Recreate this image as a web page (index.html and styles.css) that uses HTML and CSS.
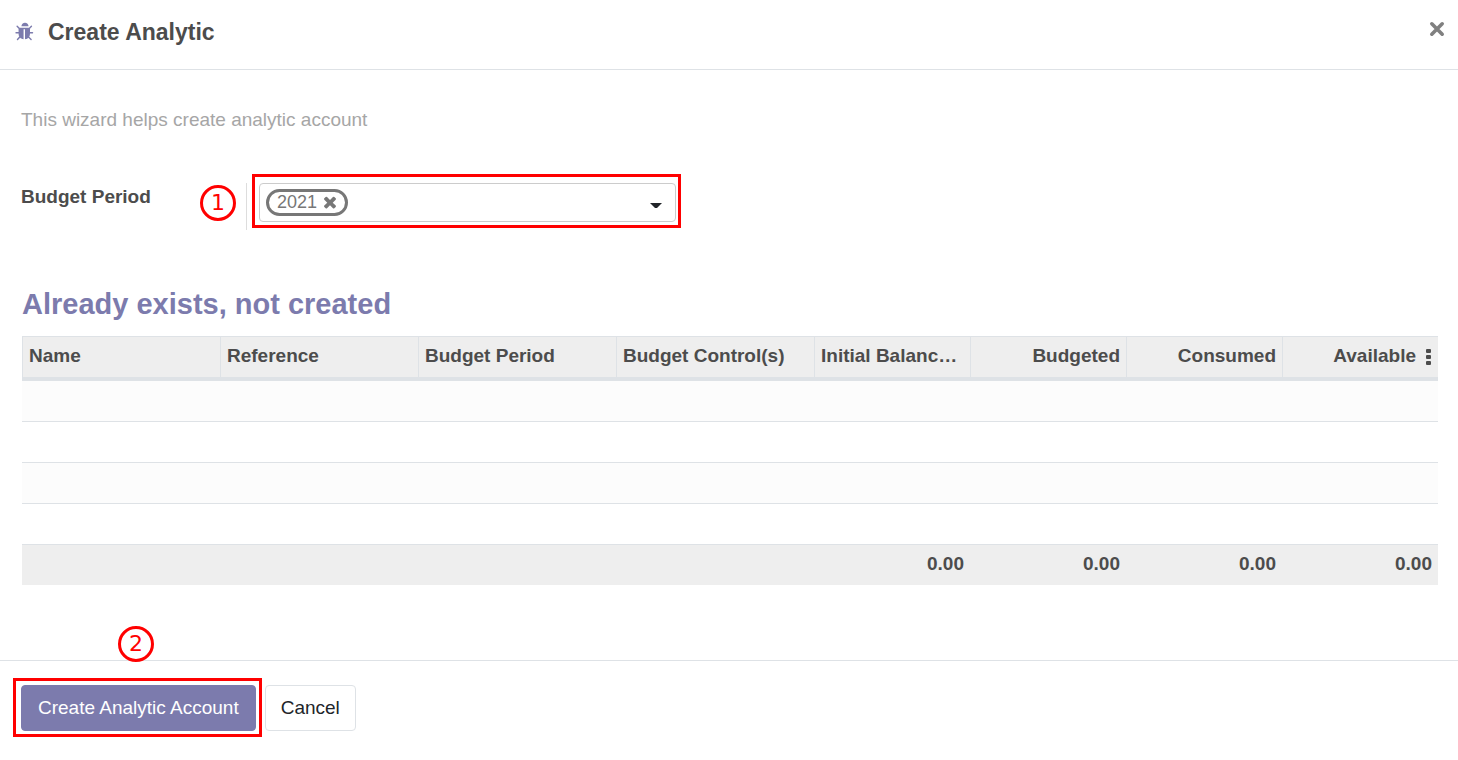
FILE: index.html
```html
<!DOCTYPE html>
<html lang="en">
<head>
<meta charset="utf-8">
<meta name="viewport" content="width=device-width, initial-scale=1">
<title>Create Analytic</title>
<link rel="stylesheet" href="styles.css">
</head>
<body>
<form class="dialog" role="dialog" aria-labelledby="title">
  <header class="dialog-header">
    <button class="icon-button debug" type="button" aria-label="Debug">
      <svg width="20" height="20" viewBox="0 0 1792 1792"><path fill="currentColor" d="M1632 960q0 26-19 45t-45 19h-224q0 171-67 290l208 209q19 19 19 45t-19 45q-18 19-45 19t-45-19l-198-197q-5 5-15 13t-42 28.500-65 36.500-82 29-97 13v-896h-128v896q-51 0-101.500-13.500t-87-33-66-39-43.500-32.500l-15-14-183 207q-20 21-48 21-24 0-43-16-19-18-20.500-44.500t15.500-46.500l202-227q-58-114-58-274h-224q-26 0-45-19t-19-45 19-45 45-19h224v-294l-173-173q-19-19-19-45t19-45 45-19 45 19l173 173h844l173-173q19-19 45-19t45 19 19 45-19 45l-173 173v294h224q26 0 45 19t19 45zm-416-576h-640q0-133 93.500-226.500t226.500-93.500 226.500 93.500 93.500 226.500z"/></svg>
    </button>
    <h1 class="dialog-title" id="title">Create Analytic</h1>
    <button class="icon-button close" type="button" aria-label="Close">
      <svg width="16" height="16" viewBox="0 0 16 16"><path d="M2.800 2.800 13.200 13.200M13.200 2.800 2.800 13.200" stroke="currentColor" stroke-width="3.600" stroke-linecap="round"/></svg>
    </button>
  </header>

  <main class="dialog-body">
    <p class="hint">This wizard helps create analytic account</p>
    <div class="field-row">
      <div class="field-label">
        <label for="period">Budget Period</label>
        <span class="step step-one">1</span>
      </div>
      <div class="field-value">
        <div class="tag-input marked">
          <span class="tag">2021
            <button class="icon-button" type="button" aria-label="Remove 2021">
              <svg width="18" height="18" viewBox="0 0 1792 1792"><path fill="currentColor" d="M1490 1222q0 40-28 68l-136 136q-28 28-68 28t-68-28l-294-294-294 294q-28 28-68 28t-68-28l-136-136q-28-28-28-68t28-68l294-294-294-294q-28-28-28-68t28-68l136-136q28-28 68-28t68 28l294 294 294-294q28-28 68-28t68 28l136 136q28 28 28 68t-28 68l-294 294 294 294q28 28 28 68z"/></svg>
            </button>
          </span>
          <input class="tag-entry" id="period" type="text" role="combobox" aria-expanded="false" autocomplete="off">
          <svg class="caret" width="12" height="6" viewBox="0 0 12 6" aria-hidden="true"><path d="M0 0h12L7 5H5z" fill="#212529"/></svg>
        </div>
      </div>
    </div>

    <section class="list-section">
      <h2 class="section-title">Already exists, not created</h2>
      <table class="list">
        <colgroup><col span="4"><col class="col-number" span="4"></colgroup>
        <thead>
          <tr>
            <th scope="col">Name</th>
            <th scope="col">Reference</th>
            <th scope="col">Budget Period</th>
            <th scope="col">Budget Control(s)</th>
            <th scope="col">Initial Balanc…</th>
            <th scope="col" class="number">Budgeted</th>
            <th scope="col" class="number">Consumed</th>
            <th scope="col" class="number">
              <span class="last-head">Available
                <button class="icon-button" type="button" aria-label="Optional columns">
                  <svg width="5" height="16" viewBox="0 0 5 16"><path fill="currentColor" d="M1 0h3q1 0 1 1v2q0 1-1 1H1Q0 4 0 3V1q0-1 1-1zm0 6h3q1 0 1 1v2q0 1-1 1H1Q0 10 0 9V7q0-1 1-1zm0 6h3q1 0 1 1v2q0 1-1 1H1q-1 0-1-1v-2q0-1 1-1z"/></svg>
                </button>
              </span>
            </th>
          </tr>
        </thead>
        <tbody>
          <tr><td colspan="8"></td></tr>
          <tr><td colspan="8"></td></tr>
          <tr><td colspan="8"></td></tr>
          <tr><td colspan="8"></td></tr>
        </tbody>
        <tfoot>
          <tr>
            <td></td><td></td><td></td><td></td>
            <td class="number">0.00</td>
            <td class="number">0.00</td>
            <td class="number">0.00</td>
            <td class="number">0.00</td>
          </tr>
        </tfoot>
      </table>
    </section>
  </main>

  <footer class="dialog-footer">
    <span class="step step-two">2</span>
    <span class="marked"><button class="button primary" type="submit">Create Analytic Account</button></span>
    <button class="button" type="button">Cancel</button>
  </footer>
</form>
</body>
</html>
```
FILE: styles.css
```css
* { box-sizing: border-box; }

body {
  margin: 0;
  background: #fff;
  color: #4c4c4c;
  font: 19px/30px "Liberation Sans", Arial, sans-serif;
}

h1, h2, p { margin: 0; }

.dialog {
  display: flex;
  flex-direction: column;
  min-height: 100vh;
}

.dialog-header {
  display: flex;
  align-items: center;
  gap: 13px;
  padding: 14px 13px 19px 14px;
  border-bottom: 1px solid #dee2e6;
}

.dialog-title {
  flex: 1;
  font-size: 23px;
  line-height: 36px;
}

.icon-button {
  display: inline-flex;
  padding: 0;
  border: 0;
  background: none;
  color: inherit;
  cursor: pointer;
}

.debug { color: #7c7bad; padding-left: 1px; }
.close { color: #808080; padding-bottom: 6px; }

.dialog-body {
  flex: 1;
  padding: 35px 20px 75px 21px;
}

.hint { color: #a6a6a6; }

.field-row {
  display: flex;
  margin-top: 48px;
}

.field-label {
  position: relative;
  width: 225px;
  font-weight: bold;
}

.field-label label {
  display: block;
  line-height: 28px;
}

.field-value {
  flex: 1;
  padding: 0 0 8px 12px;
  border-left: 1px solid #ddd;
}

.tag-input {
  display: flex;
  align-items: center;
  width: 100%;
  max-width: 417px;
  padding: 5px 13px 5px 6px;
  border: 1px solid #ccc;
  border-radius: 4px;
}

.tag {
  display: inline-flex;
  align-items: center;
  gap: 4px;
  padding: 0 6px 0 8px;
  border: 3px solid #777;
  border-radius: 14px;
  color: #777;
  font-size: 18px;
  line-height: 21px;
}

.tag-entry {
  flex: 1;
  min-width: 0;
  height: 27px;
  padding: 0 8px;
  border: 0;
  outline: 0;
  background: none;
  font: inherit;
}

.caret { margin-top: 6px; }

/* Red walkthrough outlines and step numbers. */
.marked { position: relative; }

.marked::after {
  content: "";
  position: absolute;
  inset: -10px -6px -7px -8px;
  border: 3px solid #f00;
  pointer-events: none;
}

.dialog-footer .marked::after { inset: -7px -6px -6px -8px; }

.step {
  position: absolute;
  width: 36px;
  height: 36px;
  border: 3px solid #f00;
  border-radius: 50%;
  color: #f00;
  font: 22px/30px "DejaVu Sans", sans-serif;
  text-align: center;
}

.step-one { top: 2px; right: 10px; }
.step-two { top: -35px; left: 118px; }

.section-title {
  color: #7c7bad;
  font-size: 29px;
  line-height: 36px;
}

.list-section { padding: 56px 0 0 1px; }

.list {
  width: 100%;
  margin-top: 14px;
  table-layout: fixed;
  border-collapse: separate;
  border-spacing: 0;
}

.col-number { width: 156px; }

.list th,
.list td {
  height: 41px;
  padding: 0 6px 2px;
  text-align: left;
}

.list th {
  height: 45px;
  overflow: hidden;
  border: solid #dee2e6;
  border-width: 1px 0 4px 1px;
  background: #eee;
  text-overflow: ellipsis;
  white-space: nowrap;
}

.list tbody td { border-bottom: 1px solid #dee2e6; }
.list tbody tr:nth-child(odd) { background: #fcfcfc; }

.list tfoot td {
  height: 40px;
  background: #eee;
  font-weight: bold;
}

.list .number { text-align: right; }

.last-head {
  display: flex;
  align-items: center;
  justify-content: flex-end;
  gap: 10px;
  padding-right: 1px;
}

.last-head .icon-button { padding-top: 2px; }

.dialog-footer {
  position: relative;
  display: flex;
  flex-wrap: wrap;
  gap: 9px;
  padding: 24px 21px 29px;
  border-top: 1px solid #dee2e6;
}

.button {
  display: block;
  padding: 7px 15px;
  border: 1px solid #dee2e6;
  border-radius: 4px;
  background: #fff;
  color: #212529;
  font: inherit;
  cursor: pointer;
}

.primary {
  padding: 7px 16px;
  border-color: #7c7bad;
  background: #7c7bad;
  color: #fff;
}
```
